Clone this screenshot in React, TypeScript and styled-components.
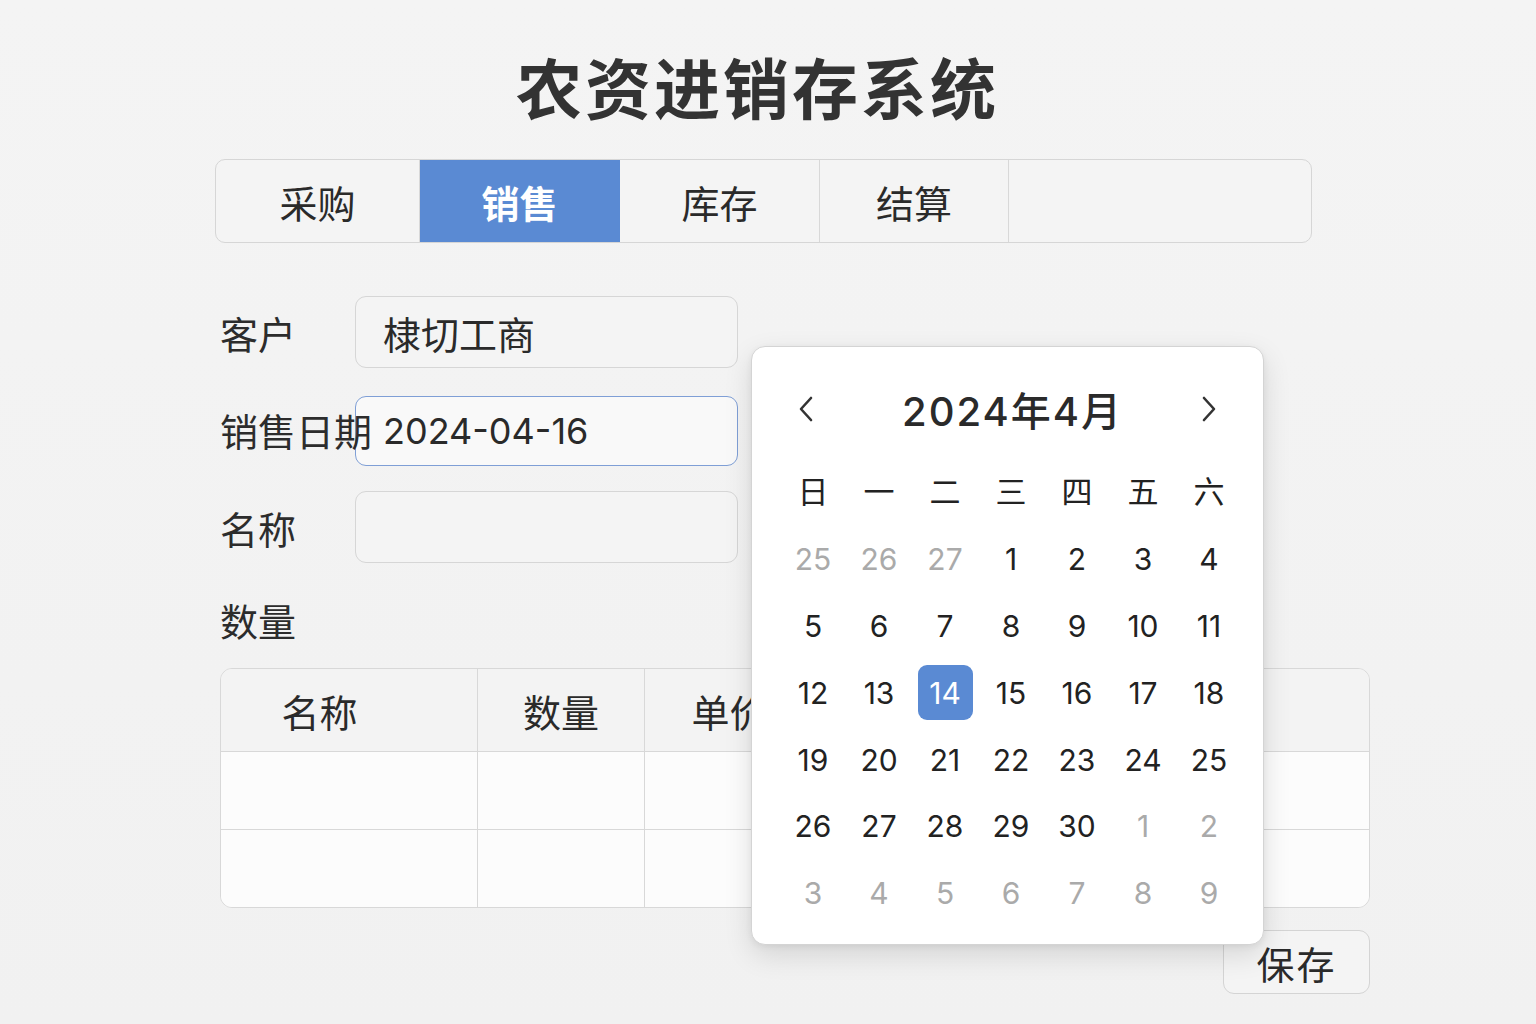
import React from 'react';
import styled, { createGlobalStyle, css } from 'styled-components';

const GlobalStyle = createGlobalStyle`
    html, body {
        margin: 0;
        padding: 0;
        background: #f2f2f2;
        font-family: "Inter", "Noto Sans CJK SC", sans-serif;
        color: #2b2b2b;
    }
`;

const BLUE = '#5a8ad3';

const Page = styled.div`
    width: 1536px;
    height: 1024px;
    overflow: hidden;
    background: linear-gradient(180deg, #f4f4f4 0%, #f1f1f1 100%);
    box-sizing: border-box;
    padding: 52px 0 0 215px;
`;

const Content = styled.div`
    position: relative;
    width: 1155px;
    display: flex;
    flex-direction: column;
`;

const Title = styled.h1`
    width: 1097px;
    box-sizing: border-box;
    padding-right: 12px;
    margin: 0;
    text-align: center;
    font-size: 66px;
    line-height: 76px;
    letter-spacing: 3px;
    font-weight: 700;
    color: #333;
`;

const Tabs = styled.div`
    margin-top: 31px;
    width: 1097px;
    height: 84px;
    display: flex;
    border: 1.5px solid #d6d6d6;
    border-radius: 10px;
    overflow: hidden;
    box-sizing: border-box;
    background: #f4f4f4;
`;

const Tab = styled.div<{ $width?: number; $active?: boolean }>`
    width: ${(p) => (p.$width ? `${p.$width}px` : 'auto')};
    flex: ${(p) => (p.$width ? 'none' : '1')};
    display: flex;
    align-items: center;
    justify-content: center;
    font-size: 38px;
    border-right: 1.5px solid #d8d8d8;
    color: #2a2a2a;
    box-sizing: border-box;
    &:last-child {
        border-right: none;
    }
    ${(p) =>
        p.$active &&
        css`
            background: ${BLUE};
            color: #fff;
            font-weight: 700;
            border-right-color: ${BLUE};
        `}
`;

const Form = styled.div`
    margin-top: 53px;
    display: flex;
    flex-direction: column;
    gap: 25px;
    padding-left: 5px;
`;

const Row = styled.div`
    display: flex;
    align-items: center;
`;

const Label = styled.div`
    width: 135px;
    flex: none;
    white-space: nowrap;
    font-size: 38px;
    color: #2c2c2c;
    position: relative;
    z-index: 1;
`;

const Input = styled.div<{ $focused?: boolean }>`
    width: 383px;
    height: ${(p) => (p.$focused ? '70px' : '72px')};
    margin-top: ${(p) => (p.$focused ? '3px' : '0')};
    box-sizing: border-box;
    border: 1.5px solid ${(p) => (p.$focused ? '#7f9fd6' : '#d6d6d6')};
    background: ${(p) => (p.$focused ? '#f9f9f9' : '#f4f4f4')};
    border-radius: 11px;
    display: flex;
    align-items: center;
    padding-left: 27px;
    font-size: ${(p) => (p.$focused ? '36px' : '38px')};
    color: #2a2a2a;
`;

const SectionLabel = styled.div`
    margin-top: 34px;
    padding-left: 5px;
    font-size: 38px;
    line-height: 50px;
    color: #2c2c2c;
`;

const Table = styled.div`
    margin-top: 21px;
    margin-left: 5px;
    width: 1150px;
    border: 1.5px solid #d8d8d8;
    border-radius: 12px;
    overflow: hidden;
    box-sizing: border-box;
    display: grid;
    grid-template-columns: 257px 167px 170px 180px 1fr;
    grid-template-rows: 83px 78px 77px;
`;

const Cell = styled.div<{ $head?: boolean; $padRight?: number }>`
    border-right: 1.5px solid #d8d8d8;
    border-bottom: 1.5px solid #d8d8d8;
    background: ${(p) => (p.$head ? '#f3f3f3' : '#fcfcfc')};
    display: flex;
    align-items: center;
    justify-content: center;
    padding-right: ${(p) => p.$padRight || 0}px;
    font-size: 38px;
    color: #2a2a2a;
    &:nth-child(5n) {
        border-right: none;
    }
    &:nth-last-child(-n + 5) {
        border-bottom: none;
    }
`;

const Footer = styled.div`
    margin-top: 22px;
    display: flex;
    justify-content: flex-end;
`;

const SaveButton = styled.button`
    width: 147px;
    height: 64px;
    border: 1.5px solid #d4d4d4;
    border-radius: 11px;
    background: #f4f4f4;
    font-family: inherit;
    font-size: 38px;
    color: #2a2a2a;
    letter-spacing: 2px;
`;

/* date picker popover laid over the form */
const Popover = styled.div`
    position: absolute;
    left: 536px;
    top: 294px;
    width: 513px;
    height: 599px;
    box-sizing: border-box;
    background: #fff;
    border: 1.5px solid #d4d4d4;
    border-radius: 14px;
    box-shadow: 0 10px 28px rgba(0, 0, 0, 0.12), 0 2px 6px rgba(0, 0, 0, 0.06);
    padding: 29px 22px 0 28px;
    z-index: 5;
`;

const CalHeader = styled.div`
    height: 66px;
    display: flex;
    align-items: center;
    justify-content: space-between;
    margin-bottom: 17px;
`;

const NavButton = styled.div<{ $side: 'left' | 'right' }>`
    width: 66px;
    display: flex;
    justify-content: center;
    transform: translateX(${(p) => (p.$side === 'left' ? '-7px' : '1px')});
    color: #333;
`;

const MonthTitle = styled.div`
    font-size: 40px;
    letter-spacing: 2px;
    color: #2a2a2a;
    font-weight: 500;
    transform: translateX(2px);
`;

const CalGrid = styled.div`
    display: grid;
    grid-template-columns: repeat(7, 66px);
    grid-auto-rows: 66.8px;
`;

const DayCell = styled.div<{ $muted?: boolean; $weekday?: boolean }>`
    display: flex;
    align-items: center;
    justify-content: center;
    padding-bottom: ${(p) => (p.$weekday ? '6px' : '0')};
    font-size: ${(p) => (p.$weekday ? '31px' : '30px')};
    color: ${(p) => (p.$muted ? '#aaaaaa' : '#222')};
`;

const Selected = styled.span`
    width: 55px;
    height: 55px;
    border-radius: 9px;
    background: ${BLUE};
    color: #fff;
    display: flex;
    align-items: center;
    justify-content: center;
`;

const Chevron = ({ dir }: { dir: 'left' | 'right' }) => (
    <svg width="16" height="28" viewBox="0 0 16 28" fill="none">
        <polyline
            points={dir === 'left' ? '13,3 3,14 13,25' : '3,3 13,14 3,25'}
            stroke="#333"
            strokeWidth="2.6"
            strokeLinecap="round"
            strokeLinejoin="round"
        />
    </svg>
);

const weekdays = ['日', '一', '二', '三', '四', '五', '六'];

const days: { n: number; muted?: boolean }[] = [
    { n: 25, muted: true },
    { n: 26, muted: true },
    { n: 27, muted: true },
    ...Array.from({ length: 30 }, (_, i) => ({ n: i + 1 })),
    ...Array.from({ length: 9 }, (_, i) => ({ n: i + 1, muted: true })),
];

const tabs = [
    { name: '采购', width: 204 },
    { name: '销售', width: 200, active: true },
    { name: '库存', width: 200 },
    { name: '结算', width: 189 },
    { name: '' },
];

const columns = ['名称', '数量', '单价', '金额', '备注'];

export default function App() {
    return (
        <Page>
            <GlobalStyle />
            <Content>
                <Title>农资进销存系统</Title>

                <Tabs>
                    {tabs.map((t, i) => (
                        <Tab key={i} $width={t.width} $active={t.active}>
                            {t.name}
                        </Tab>
                    ))}
                </Tabs>

                <Form>
                    <Row>
                        <Label>客户</Label>
                        <Input>棣切工商</Input>
                    </Row>
                    <Row>
                        <Label>销售日期</Label>
                        <Input $focused>2024-04-16</Input>
                    </Row>
                    <Row>
                        <Label>名称</Label>
                        <Input />
                    </Row>
                </Form>

                <SectionLabel>数量</SectionLabel>

                <Table>
                    {columns.map((c, i) => (
                        <Cell key={c} $head $padRight={i === 0 ? 59 : 0}>
                            {c}
                        </Cell>
                    ))}
                    {Array.from({ length: 10 }, (_, i) => (
                        <Cell key={i} />
                    ))}
                </Table>

                <Footer>
                    <SaveButton>保存</SaveButton>
                </Footer>

                <Popover>
                    <CalHeader>
                        <NavButton $side="left">
                            <Chevron dir="left" />
                        </NavButton>
                        <MonthTitle>2024年4月</MonthTitle>
                        <NavButton $side="right">
                            <Chevron dir="right" />
                        </NavButton>
                    </CalHeader>
                    <CalGrid>
                        {weekdays.map((w) => (
                            <DayCell key={w} $weekday>
                                {w}
                            </DayCell>
                        ))}
                        {days.map((d, i) => (
                            <DayCell key={i} $muted={d.muted}>
                                {!d.muted && d.n === 14 ? <Selected>{d.n}</Selected> : d.n}
                            </DayCell>
                        ))}
                    </CalGrid>
                </Popover>
            </Content>
        </Page>
    );
}
